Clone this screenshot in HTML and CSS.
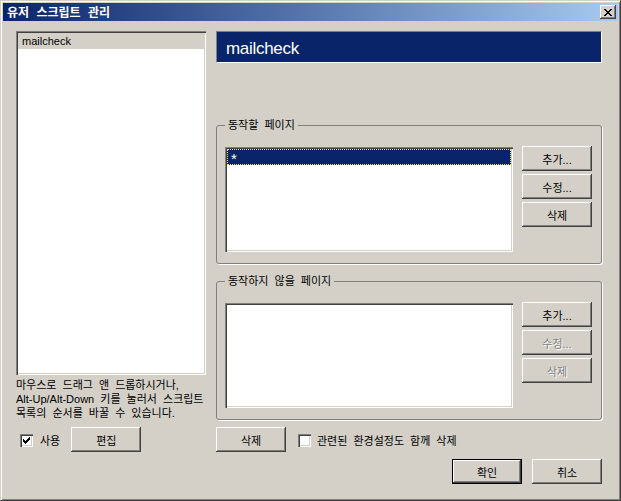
FILE: index.html
```html
<!DOCTYPE html>
<html lang="ko">
<head>
<meta charset="utf-8">
<title>유저 스크립트 관리</title>
<link rel="stylesheet" href="styles.css">
</head>
<body>
<div class="window">
  <div class="titlebar">
    <span class="title">유저 스크립트 관리</span>
    <button class="close" aria-label="닫기"><svg width="8" height="7" viewBox="0 0 8 7" shape-rendering="crispEdges"><path fill="#000" d="M0 0h2v1H0z M6 0h2v1H6z M1 1h2v1H1z M5 1h2v1H5z M2 2h4v1H2z M3 3h2v1H3z M2 4h4v1H2z M1 5h2v1H1z M5 5h2v1H5z M0 6h2v1H0z M6 6h2v1H6z"/></svg></button>
  </div>
  <div class="content">
    <div class="columns">
      <div class="col-left">
        <div class="listbox scripts">
          <div class="item inactive">mailcheck</div>
        </div>
        <p class="note">마우스로 드래그 앤 드롭하시거나,<br>Alt-Up/Alt-Down 키를 눌러서 스크립트<br>목록의 순서를 바꿀 수 있습니다.</p>
        <div class="row">
          <label class="check left"><span class="box"><svg width="7" height="7" viewBox="0 0 7 7" shape-rendering="crispEdges"><path fill="#000" d="M6 0h1v1H6z M5 1h2v1H5z M0 2h1v1H0z M4 2h3v1H4z M0 3h2v1H0z M3 3h3v1H3z M0 4h5v1H0z M1 5h3v1H1z M2 6h1v1H2z"/></svg></span>사용</label>
          <button class="btn edit">편집</button>
        </div>
      </div>
      <div class="col-right">
        <div class="header">mailcheck</div>
        <fieldset class="group first">
          <legend>동작할 페이지</legend>
          <div class="group-body">
            <div class="listbox pages"><div class="item selected">*</div></div>
            <div class="btn-col">
              <button class="btn">추가...</button>
              <button class="btn">수정...</button>
              <button class="btn">삭제</button>
            </div>
          </div>
        </fieldset>
        <fieldset class="group second">
          <legend>동작하지 않을 페이지</legend>
          <div class="group-body">
            <div class="listbox pages"></div>
            <div class="btn-col">
              <button class="btn">추가...</button>
              <button class="btn disabled">수정...</button>
              <button class="btn disabled">삭제</button>
            </div>
          </div>
        </fieldset>
        <div class="row">
          <button class="btn">삭제</button>
          <label class="check right"><span class="box"></span>관련된 환경설정도 함께 삭제</label>
        </div>
      </div>
    </div>
    <div class="actions">
      <button class="btn default">확인</button>
      <button class="btn">취소</button>
    </div>
  </div>
</div>
</body>
</html>
```

FILE: styles.css
```css
* { box-sizing: border-box; }
html, body { margin: 0; padding: 0; }
body {
  background: #d4d0c8;
  font-family: "Liberation Sans", "Noto Sans CJK KR", sans-serif;
  font-size: 11px;
  word-spacing: 3px;
  color: #000;
}
.window {
  width: 621px;
  height: 501px;
  border: 1px solid;
  border-color: #d4d0c8 #404040 #404040 #d4d0c8;
  box-shadow: inset 1px 1px #fff, inset -1px -1px #808080;
  padding: 2px;
  background: #d4d0c8;
  display: flex;
  flex-direction: column;
}
.titlebar {
  height: 18px;
  display: flex;
  align-items: center;
  justify-content: space-between;
  padding: 0 2px 0 4px;
  background: linear-gradient(to right, #0a246a, #a6caf0);
}
.title {
  color: #fff;
  font-weight: bold;
  font-size: 12px;
  word-spacing: 4px;
  font-family: "Noto Sans CJK KR", sans-serif;
  line-height: 18px;
}
.close {
  width: 16px;
  height: 14px;
  padding: 0;
  border: 0;
  background: #d4d0c8;
  box-shadow: inset -1px -1px #404040, inset 1px 1px #fff, inset -2px -2px #808080;
  display: flex;
  align-items: center;
  justify-content: center;
}
.content {
  flex: 1;
  padding: 10px 16px 0 13px;
  display: flex;
  flex-direction: column;
}
.columns { display: flex; gap: 10px; }
.col-left { width: 190px; display: flex; flex-direction: column; }
.col-right { width: 386px; display: flex; flex-direction: column; }

.listbox {
  background: #fff;
  box-shadow: inset 1px 1px #808080, inset 2px 2px #404040, inset -1px -1px #fff, inset -2px -2px #d4d0c8;
  padding: 2px;
}
.scripts { height: 344px; }
.item {
  height: 16px;
  line-height: 16px;
  padding-left: 4px;
  white-space: nowrap;
}
.item.inactive { background: #d4d0c8; }
.item.selected {
  background: #0a246a;
  color: #fff;
  font-size: 15px;
  line-height: 19px;
  outline: 1px dotted #f5db95;
  outline-offset: -1px;
}
.note {
  margin: 3px 0 0;
  line-height: 14px;
  white-space: nowrap;
}
.row {
  display: flex;
  align-items: center;
  height: 25px;
  margin-top: 7px;
}
.check { display: flex; align-items: center; white-space: nowrap; }
.check.left { margin-left: 4px; }
.check.right { margin-left: 12px; }
.box {
  width: 13px;
  height: 13px;
  background: #fff;
  box-shadow: inset 1px 1px #808080, inset 2px 2px #404040, inset -1px -1px #fff, inset -2px -2px #d4d0c8;
  display: flex;
  align-items: center;
  justify-content: center;
  margin-right: 6px;
  position: relative;
  top: 1px;
}
.check.left .box { margin-right: 7px; }
.btn {
  width: 70px;
  height: 25px;
  padding: 0;
  border: 0;
  background: #d4d0c8;
  font: inherit;
  word-spacing: inherit;
  color: #000;
  box-shadow: inset -1px -1px #404040, inset 1px 1px #fff, inset -2px -2px #808080;
  flex: none;
}
.btn.disabled { color: #808080; text-shadow: 1px 1px #fff; }
.btn.default {
  box-shadow: inset 0 0 0 1px #000, inset -2px -2px #404040, inset 2px 2px #fff, inset -3px -3px #808080;
}
.edit { margin-left: 11px; }

.header {
  height: 32px;
  background: #0a246a;
  color: #fff;
  border: 1px solid;
  border-color: #808080 #fff #fff #808080;
  font-size: 17px;
  letter-spacing: -0.3px;
  line-height: 19px;
  padding: 7px 0 0 9px;
}
.group {
  margin: 0;
  padding: 14px 9px 11px 8px;
  border: 1px solid #808080;
  border-radius: 3px;
  box-shadow: 1px 1px 0 #fff;
  min-width: 0;
}
.group.first { margin-top: 55px; }
.group.second { margin-top: 10px; }
.group legend {
  padding: 0 3px;
  line-height: 14px;
  height: 14px;
}
.group-body { display: flex; gap: 9px; }
.pages { width: 288px; height: 105px; margin-top: 1px; }
.btn-col { display: flex; flex-direction: column; gap: 3px; }
.actions {
  display: flex;
  justify-content: flex-end;
  gap: 10px;
  margin-top: 7px;
}
```
